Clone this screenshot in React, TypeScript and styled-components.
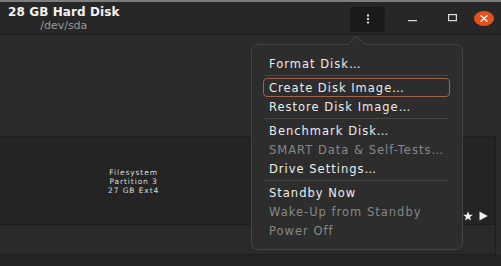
import React from "react";
import styled, { createGlobalStyle } from "styled-components";

const Global = createGlobalStyle`
  html, body { margin: 0; padding: 0; background: #252525; }
  body { font-family: "DejaVu Sans", "Liberation Sans", sans-serif; }
`;

const Window = styled.div`
  position: relative;
  width: 501px;
  height: 266px;
  overflow: hidden;
  background: #2b2b2b;
  display: flex;
  flex-direction: column;
`;

const TopStrip = styled.div`
  height: 2px;
  background: #7d7d7b;
  flex-shrink: 0;
`;

const HeaderBar = styled.header`
  height: 32px;
  flex-shrink: 0;
  background: #272727;
  border-bottom: 1px solid #1e1e1e;
  display: flex;
  align-items: center;
  padding: 0 7px 0 8px;
`;

const TitleBlock = styled.div`
  display: flex;
  flex-direction: column;
  align-items: center;
  line-height: 1;
  margin-top: 1px;
`;

const Title = styled.div`
  font-weight: bold;
  font-size: 12px;
  color: #f2f2f2;
  letter-spacing: 0.1px;
`;

const Subtitle = styled.div`
  font-size: 11px;
  color: #9a9a9a;
  margin-top: 2px;
`;

const Spacer = styled.div`
  flex: 1;
`;

const MenuButton = styled.div`
  width: 35px;
  height: 25px;
  border-radius: 4px;
  background: #1b1b1b;
  display: flex;
  align-items: center;
  justify-content: center;
  margin-top: 2px;
`;

const WinButton = styled.div<{ $w?: number }>`
  width: ${(p) => p.$w ?? 38}px;
  height: 25px;
  display: flex;
  align-items: center;
  justify-content: center;
`;

const CloseBtn = styled.div`
  width: 20px;
  height: 15px;
  border-radius: 50%;
  background: #e5501f;
  display: flex;
  align-items: center;
  justify-content: center;
  margin-left: 10px;
`;

const Body = styled.div`
  flex: 1;
  display: flex;
  flex-direction: column;
  padding-top: 101px;
`;

const Frame = styled.div`
  width: 495px;
  border-right: 1px solid #1d1d1d;
  border-bottom: 1px solid #1d1d1d;
  border-top: 1px solid #1e1e1e;
  display: flex;
  flex-direction: column;
`;

const PartitionBox = styled.div`
  height: 87px;
  background: #242424;
  border-bottom: 1px solid #1d1d1d;
  display: flex;
  align-items: center;
  padding-left: 108px;
  position: relative;
`;

const PartitionLabel = styled.div`
  font-size: 7.5px;
  line-height: 9px;
  letter-spacing: 0.9px;
  color: #dedede;
  text-align: center;
  margin-top: 2px;
  white-space: nowrap;
`;

const PartitionIcons = styled.div`
  position: absolute;
  right: 7px;
  bottom: 3px;
  display: flex;
  gap: 6px;
  align-items: center;
`;

const LowerRow = styled.div`
  height: 29px;
  background: #2a2a2a;
`;

const Below = styled.div`
  flex: 1;
  background: #242424;
`;

const Popover = styled.div`
  position: absolute;
  left: 251px;
  top: 44px;
  width: 212px;
  height: 206px;
  background: #2d2d2d;
  border: 1px solid #444444;
  border-radius: 7px;
  box-sizing: border-box;
  padding: 9px 12px 9px 11px;
  display: flex;
  flex-direction: column;
`;

const Arrow = styled.div`
  position: absolute;
  top: -7px;
  left: 98px;
  width: 12px;
  height: 12px;
  background: #2d2d2d;
  border-top: 1px solid #444444;
  border-left: 1px solid #444444;
  transform: rotate(45deg);
`;

const Item = styled.div<{ $dim?: boolean; $focus?: boolean }>`
  height: 19px;
  flex-shrink: 0;
  box-sizing: border-box;
  display: flex;
  align-items: center;
  padding-left: 5px;
  font-size: 11.5px;
  letter-spacing: 1px;
  color: ${(p) => (p.$dim ? "#878787" : "#ececec")};
  border: 1.5px solid ${(p) => (p.$focus ? "#a2634b" : "transparent")};
  border-radius: 4px;
  white-space: nowrap;
`;

const Separator = styled.div`
  height: 1px;
  flex-shrink: 0;
  background: #464646;
  margin: 2px 2px 2px 2px;
`;

const items: Array<{ label: string; dim?: boolean; focus?: boolean } | "sep"> = [
  { label: "Format Disk…" },
  "sep",
  { label: "Create Disk Image…", focus: true },
  { label: "Restore Disk Image…" },
  "sep",
  { label: "Benchmark Disk…" },
  { label: "SMART Data & Self-Tests…", dim: true },
  { label: "Drive Settings…" },
  "sep",
  { label: "Standby Now" },
  { label: "Wake-Up from Standby", dim: true },
  { label: "Power Off", dim: true },
];

export default function App() {
  return (
    <>
      <Global />
      <Window>
        <TopStrip />
        <HeaderBar>
          <TitleBlock>
            <Title>28 GB Hard Disk</Title>
            <Subtitle>/dev/sda</Subtitle>
          </TitleBlock>
          <Spacer />
          <MenuButton>
            <svg width="4" height="10" viewBox="0 0 4 10">
              <rect x="1" y="0.5" width="2" height="2" fill="#e0e0e0" />
              <rect x="1" y="4" width="2" height="2" fill="#e0e0e0" />
              <rect x="1" y="7.5" width="2" height="2" fill="#e0e0e0" />
            </svg>
          </MenuButton>
          <WinButton $w={55}>
            <svg width="9" height="10" viewBox="0 0 9 10">
              <rect x="0" y="7" width="9" height="1.2" fill="#dcdcdc" />
            </svg>
          </WinButton>
          <WinButton $w={24}>
            <svg width="9" height="8" viewBox="0 0 9 8">
              <rect x="0.6" y="0.6" width="7.8" height="6" fill="none" stroke="#dcdcdc" strokeWidth="1.2" />
            </svg>
          </WinButton>
          <CloseBtn>
            <svg width="8" height="7" viewBox="0 0 8 7">
              <path d="M1 0.8 L7 6.2 M7 0.8 L1 6.2" stroke="#ffffff" strokeWidth="1.4" strokeLinecap="round" />
            </svg>
          </CloseBtn>
        </HeaderBar>
        <Body>
          <Frame>
            <PartitionBox>
              <PartitionLabel>
                Filesystem
                <br />
                Partition 3
                <br />
                27 GB Ext4
              </PartitionLabel>
              <PartitionIcons>
                <svg width="10" height="10" viewBox="0 0 10 10">
                  <polygon points="5,0.3 6.3,3.7 9.9,3.8 7,6 8,9.6 5,7.5 2,9.6 3,6 0.1,3.8 3.7,3.7" fill="#f0f0f0" />
                </svg>
                <svg width="9" height="10" viewBox="0 0 9 10">
                  <polygon points="0.5,0.5 8.8,5 0.5,9.5" fill="#f0f0f0" />
                </svg>
              </PartitionIcons>
            </PartitionBox>
            <LowerRow />
          </Frame>
          <Below />
        </Body>
        <Popover>
          <Arrow />
          {items.map((it, i) =>
            it === "sep" ? (
              <Separator key={i} />
            ) : (
              <Item key={i} $dim={it.dim} $focus={it.focus}>
                {it.label}
              </Item>
            )
          )}
        </Popover>
      </Window>
    </>
  );
}
